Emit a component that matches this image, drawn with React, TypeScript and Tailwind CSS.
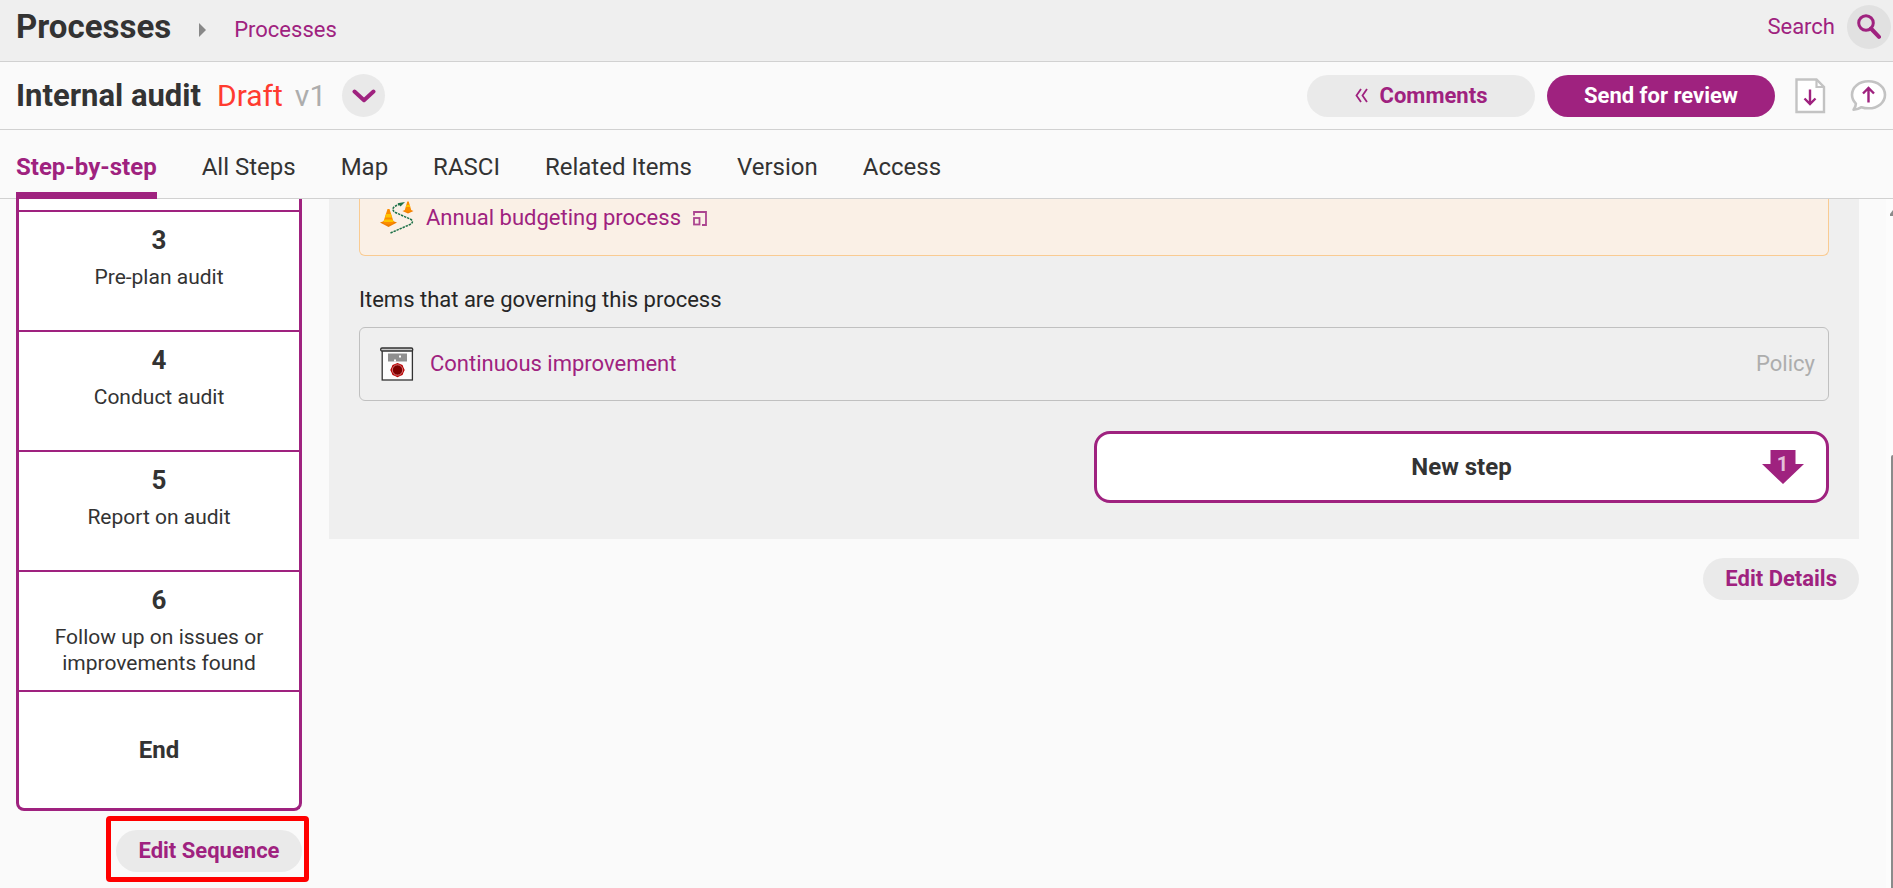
import React from "react";

const tabs = ["Step-by-step", "All Steps", "Map", "RASCI", "Related Items", "Version", "Access"];

const steps = [
  { number: 3, name: "Pre-plan audit" },
  { number: 4, name: "Conduct audit" },
  { number: 5, name: "Report on audit" },
  { number: 6, name: "Follow up on issues or improvements found" },
];

function SearchIcon() {
  return (
    <svg width="24" height="26" viewBox="0 0 24 26" fill="none" stroke="#9f227f" aria-hidden="true">
      <circle cx="9" cy="9" r="7.3" strokeWidth="3" />
      <path d="M14 14.5 L22 22.8" strokeWidth="4" strokeLinecap="round" />
    </svg>
  );
}

function ChevronIcon() {
  return (
    <svg width="24" height="14" viewBox="0 0 24 14" fill="none" stroke="#9f227f" strokeWidth="4" strokeLinecap="round" strokeLinejoin="round" aria-hidden="true">
      <path d="M2.5 2.5 L12 11.2 L21.5 2.5" />
    </svg>
  );
}

function DoubleChevronIcon() {
  return (
    <svg width="13" height="15" viewBox="0 0 13 15" fill="none" stroke="#9f227f" strokeWidth="1.8" aria-hidden="true">
      <path d="M6 1 L1.5 7.5 L6 14 M12 1 L7.5 7.5 L12 14" />
    </svg>
  );
}

function DownloadIcon() {
  return (
    <svg width="31" height="36" viewBox="0 0 31 36" fill="none" aria-hidden="true">
      <path d="M1.5 1.5 H21.5 L29 9 V34 H1.5 Z" fill="#fff" stroke="#c3c3c3" strokeWidth="2.4" />
      <path d="M21.5 1.5 V9 H29" stroke="#c3c3c3" strokeWidth="2.2" />
      <path d="M15 11.5 V26 M9.5 20.5 L15 26 L20.5 20.5" stroke="#9f227f" strokeWidth="2.4" />
    </svg>
  );
}

function ShareCommentIcon() {
  return (
    <svg width="37" height="34" viewBox="0 0 37 34" fill="none" aria-hidden="true">
      <path
        d="M18.5 2.3 C28 2.3 35 8.2 35 15.8 C35 23.4 28 29.3 18.5 29.3 C16 29.3 13.6 28.9 11.5 28.2 C9 29.8 6.3 30.7 3.6 30.7 C5 29 5.8 27 5.9 24.6 C3.4 22.2 2 19.2 2 15.8 C2 8.2 9 2.3 18.5 2.3 Z"
        fill="#fff"
        stroke="#c3c3c3"
        strokeWidth="2.6"
        strokeLinejoin="round"
      />
      <path d="M18.5 23.5 V9 M13 14.5 L18.5 9 L24 14.5" stroke="#9f227f" strokeWidth="2.4" />
    </svg>
  );
}

function ProcessIcon() {
  return (
    <svg width="34" height="34" viewBox="0 0 34 34" fill="none" aria-hidden="true">
      <path d="M10.5 32 L30 23.5 C33.5 21.5 33 19.5 30 18 L15.5 11.5 C11 9 12.5 5.5 19 3.5" stroke="#1d7148" strokeWidth="1.5" strokeDasharray="2.4 0.9" />
      <path d="M17.5 2.2 L25 1 L20.5 5.4 Z" fill="#1d7148" />
      <path d="M0 21.5 L8.5 18.5 L17 21.5 L8.5 26 Z" fill="#ef7d00" />
      <path d="M7.5 8 H9.5 L14 22 Q8.5 25 3 22 Z" fill="#fb8c00" />
      <path d="M6.1 13 H10.9 L12 16.4 H5 Z M4.3 18.4 H12.7 L13.5 21 H3.5 Z" fill="#fdc400" />
      <path d="M22.5 10 L28 8 L33.5 10 L28 12.6 Z" fill="#ef7d00" />
      <path d="M27.3 0.5 H28.7 L31.5 10 Q28 11.7 24.5 10 Z" fill="#fb8c00" />
      <path d="M26.3 4 H29.7 L30.3 6 H25.7 Z" fill="#fdc400" />
    </svg>
  );
}

function PolicyIcon() {
  return (
    <svg width="34" height="34" viewBox="0 0 34 34" fill="none" aria-hidden="true">
      <rect x="2.2" y="3" width="30.2" height="30" fill="#fcfcfc" stroke="#333" strokeWidth="1.3" />
      <rect x="0.7" y="1" width="32" height="3" rx="1.3" fill="#c9c9c9" stroke="#333" strokeWidth="1.3" />
      <path d="M8 7.5 H27 M8 9.5 H27 M8 11.5 H27 M8 13.5 H27" stroke="#8f8f8f" strokeWidth="1.8" />
      <rect x="19" y="8.5" width="2" height="2" fill="#fff" />
      <rect x="14" y="12.5" width="2" height="2" fill="#fff" />
      <path d="M17.5 16 L20 17 L22.5 18 L23.5 20.5 L24.7 23 L23.5 25.5 L22.5 28 L20 29 L17.5 30.2 L15 29 L12.5 28 L11.5 25.5 L10.3 23 L11.5 20.5 L12.5 18 L15 17 Z" fill="#b80000" />
      <circle cx="17.5" cy="23" r="5.2" fill="#7d0000" stroke="#f2a9a9" strokeWidth="0.7" />
    </svg>
  );
}

function OpenWindowIcon() {
  return (
    <svg width="14" height="15" viewBox="0 0 14 15" fill="none" stroke="#ab4590" strokeWidth="1.8" aria-hidden="true">
      <path d="M1 4.5 V1 H13 V14 H9" />
      <rect x="1" y="7" width="5.5" height="6.5" />
    </svg>
  );
}

export default function App() {
  return (
    <div className="flex h-screen flex-col overflow-hidden bg-[#fafafa] font-['Roboto',sans-serif] text-[22px] leading-8 text-[#333]">
      <header className="flex h-[62px] shrink-0 items-center justify-between border-b border-[#d1d1d1] bg-[#efefef] pr-0.5 pb-2 pl-4">
        <div className="flex items-center">
          <h1 className="text-[33px] leading-10 font-bold">Processes</h1>
          <svg className="mt-1.5 ml-7" width="7" height="14" viewBox="0 0 7 14" aria-hidden="true">
            <path d="M0 0 L7 7 L0 14 Z" fill="#888" />
          </svg>
          <a href="#processes" className="mt-1.5 ml-7 text-[#9f227f]">Processes</a>
        </div>
        <button type="button" className="flex items-center gap-3 text-[#9f227f]">
          Search
          <span className="flex size-11 items-center justify-center rounded-full bg-[#e1e1e1]"><SearchIcon /></span>
        </button>
      </header>

      <section className="flex h-[68px] shrink-0 items-center justify-between border-b border-[#d1d1d1] pr-1.5 pl-4">
        <div className="flex items-center">
          <h2 className="text-[31px] font-bold">Internal audit</h2>
          <span className="ml-4 text-[30px] text-[#ff3b30]">Draft</span>
          <span className="ml-3 text-[30px] text-[#adadad]">v1</span>
          <button type="button" aria-label="Version menu" className="ml-4 flex size-[43px] items-center justify-center rounded-full bg-[#e9e9e9]"><ChevronIcon /></button>
        </div>
        <div className="flex items-center">
          <button type="button" className="flex h-[42px] w-[228px] items-center justify-center gap-3 rounded-full bg-[#eaeaea] font-bold text-[#9f227f]">
            <DoubleChevronIcon />
            Comments
          </button>
          <button type="button" className="ml-3 h-[42px] w-[228px] rounded-full bg-[#9f227f] font-bold text-white">Send for review</button>
          <button type="button" aria-label="Download" className="ml-5"><DownloadIcon /></button>
          <button type="button" aria-label="Share feedback" className="ml-6"><ShareCommentIcon /></button>
        </div>
      </section>

      <nav className="flex h-[69px] shrink-0 gap-[45px] border-b border-[#d1d1d1] pl-4 text-2xl">
        {tabs.map((tab, i) => (
          <a
            key={tab}
            href={"#" + tab}
            className={
              i === 0
                ? "-mb-px flex items-center border-t-7 border-b-7 border-t-transparent border-b-[#9f227f] pt-1 font-bold text-[#9f227f]"
                : "flex items-center pt-1.5"
            }
          >
            {tab}
          </a>
        ))}
      </nav>

      <main className="flex min-h-0 flex-1 overflow-hidden">
        <aside className="ml-4 w-[286px] shrink-0">
          <ol className="rounded-b-lg border-3 border-t-0 border-[#9f227f] bg-white pt-[11px] text-center">
            {steps.map((step) => (
              <li key={step.number} className="h-[120px] border-t-2 border-[#9f227f] px-6 pt-3">
                <div className="text-[26px] leading-8 font-bold">{step.number}</div>
                <div className="mt-2 text-[21px] leading-[26px]">{step.name}</div>
              </li>
            ))}
            <li className="flex h-[118px] items-center justify-center border-t-2 border-[#9f227f] text-2xl font-bold">End</li>
          </ol>
          <div className="mt-[5px] -mr-[7px] ml-[90px] rounded-sm border-5 border-[#ff0000] pt-[9px] pr-[2px] pb-[5px] pl-[5px]">
            <button type="button" className="block h-[42px] w-full rounded-full bg-[#eaeaea] font-bold text-[#9f227f]">Edit Sequence</button>
          </div>
        </aside>

        <div className="ml-[27px] flex flex-1 flex-col items-end">
          <section className="w-full bg-[#efefef] px-[30px] pb-9">
            <div className="flex h-[57px] items-start rounded-b-md border border-t-0 border-[#f9cb92] bg-[#faf0e6] px-5 pt-0.5">
              <ProcessIcon />
              <a href="#annual-budgeting" className="ml-3 flex items-center gap-3 leading-[34px] text-[#9f227f]">
                Annual budgeting process
                <OpenWindowIcon />
              </a>
            </div>
            <h3 className="mt-7 text-[#262626]">Items that are governing this process</h3>
            <div className="mt-[11px] flex h-[74px] items-center rounded-md border border-[#c0c0c0] pr-[13px] pl-5">
              <PolicyIcon />
              <a href="#continuous-improvement" className="ml-4 text-[#9f227f]">Continuous improvement</a>
              <span className="ml-auto text-[#adadad]">Policy</span>
            </div>
            <button type="button" className="relative mt-[30px] ml-auto block h-[72px] w-1/2 rounded-2xl border-3 border-[#9f227f] bg-white text-2xl font-bold">
              New step
              <svg className="absolute top-4 right-[22px]" width="42" height="34" viewBox="0 0 42 34" aria-hidden="true">
                <path d="M8.5 0 H33.5 V14 H42 L21 34 L0 14 H8.5 Z" fill="#9f227f" />
                <text x="20.5" y="21" textAnchor="middle" fontSize="20" fontWeight="700" fill="#e3bfd9">1</text>
              </svg>
            </button>
          </section>
          <button type="button" className="mt-[19px] h-[42px] rounded-full bg-[#eaeaea] px-[22px] font-bold text-[#9f227f]">Edit Details</button>
        </div>

        <div className="ml-[27px] flex w-[7px] shrink-0 flex-col items-end bg-[#fcfcfc]" aria-hidden="true">
          <svg className="mt-[11px]" width="3" height="6" viewBox="0 0 3 6">
            <path d="M3 0 L0 4 V6 H3 Z" fill="#8b8b8b" />
          </svg>
          <div className="mt-[239px] w-0.5 flex-1 rounded-tl-sm bg-[#8b8b8b]" />
        </div>
      </main>
    </div>
  );
}
